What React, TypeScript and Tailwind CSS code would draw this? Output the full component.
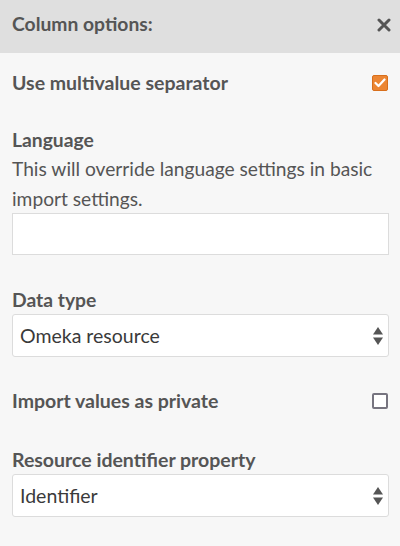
import React from "react";

function Arrows() {
  return (
    <svg width="12" height="20" viewBox="0 0 12 20" className="shrink-0">
      <path d="M6 1 L11 8.5 L1 8.5 Z" fill="#555" />
      <path d="M1 11.5 L11 11.5 L6 19 Z" fill="#555" />
    </svg>
  );
}

function Select({ value }: { value: string }) {
  return (
    <div className="flex h-[43px] items-center justify-between rounded-[3px] border border-[#dcdcdc] bg-white pl-[7px] pr-[4px]">
      <span className="text-[19.5px] leading-[30px] text-[#3a3a3a]">{value}</span>
      <Arrows />
    </div>
  );
}

export default function App() {
  return (
    <div
      className="min-h-[546px] w-[400px] bg-[#f7f7f7] text-[#555555]"
      style={{ fontFamily: "Lato, 'Open Sans', sans-serif" }}
    >
      <div className="flex h-[53px] items-start justify-between bg-[#dfdfdf] pl-[12px] pr-[9px] pt-[9px]">
        <span className="text-[19.3px] font-bold leading-[30px]">Column options:</span>
        <svg width="14" height="14" viewBox="0 0 14 14" className="mt-[9px]">
          <path d="M2 2 L12 12 M12 2 L2 12" stroke="#555" strokeWidth="3" strokeLinecap="round" />
        </svg>
      </div>

      <div className="pl-[12px] pr-[11px]">
        <div className="mt-[15px] flex h-[30px] items-center justify-between">
          <span className="text-[19.5px] font-bold leading-[30px]">Use multivalue separator</span>
          <span className="mr-px flex h-[16px] w-[16px] items-center justify-center rounded-[2px] border border-[#d86f1c] bg-[#ec8633]">
            <svg width="12" height="10" viewBox="0 0 12 10">
              <path d="M1.5 5 L4.5 8 L10.5 1.5" stroke="#fff" strokeWidth="2.2" fill="none" strokeLinecap="round" strokeLinejoin="round" />
            </svg>
          </span>
        </div>

        <div className="mt-[28px] text-[19.3px] font-bold leading-[28px]">Language</div>
        <div className="text-[19.2px] leading-[30px]">
          This will override language settings in basic import settings.
        </div>
        <div className="-mt-px h-[42px] border border-[#dcdcdc] bg-white" />

        <div className="mt-[31px] text-[19.3px] font-bold leading-[28px]">Data type</div>
        <Select value="Omeka resource" />

        <div className="mt-[29px] flex h-[30px] items-center justify-between">
          <span className="text-[19.5px] font-bold leading-[30px]">Import values as private</span>
          <span className="mr-px h-[16px] w-[16px] rounded-[2px] border-2 border-[#76747f] bg-white" />
        </div>

        <div className="mt-[30px] text-[19.5px] font-bold leading-[28px]">Resource identifier property</div>
        <Select value="Identifier" />
      </div>
    </div>
  );
}
